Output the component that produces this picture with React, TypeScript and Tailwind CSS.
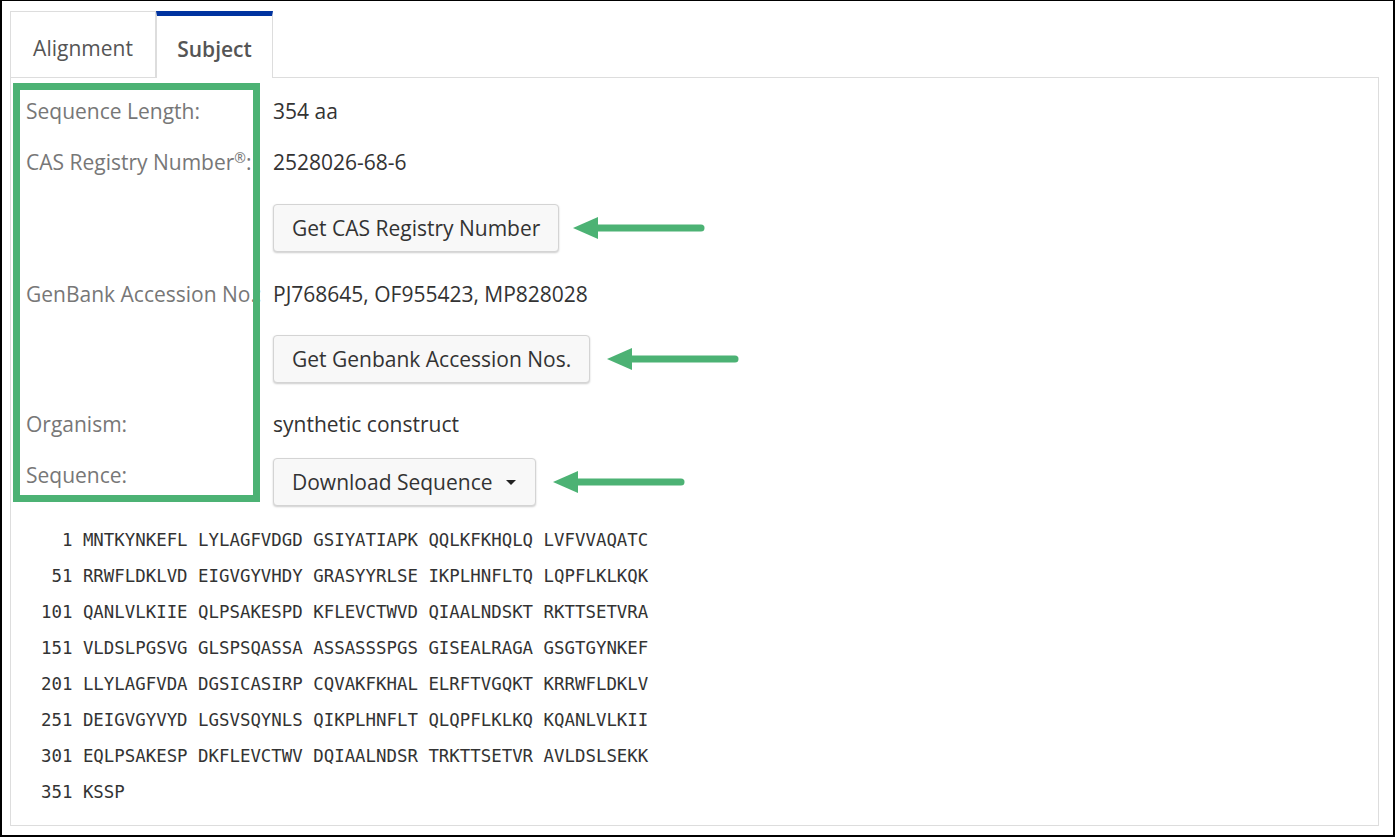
const sequence = [
  "MNTKYNKEFL LYLAGFVDGD GSIYATIAPK QQLKFKHQLQ LVFVVAQATC",
  "RRWFLDKLVD EIGVGYVHDY GRASYYRLSE IKPLHNFLTQ LQPFLKLKQK",
  "QANLVLKIIE QLPSAKESPD KFLEVCTWVD QIAALNDSKT RKTTSETVRA",
  "VLDSLPGSVG GLSPSQASSA ASSASSSPGS GISEALRAGA GSGTGYNKEF",
  "LLYLAGFVDA DGSICASIRP CQVAKFKHAL ELRFTVGQKT KRRWFLDKLV",
  "DEIGVGYVYD LGSVSQYNLS QIKPLHNFLT QLQPFLKLKQ KQANLVLKII",
  "EQLPSAKESP DKFLEVCTWV DQIAALNDSR TRKTTSETVR AVLDSLSEKK",
  "KSSP",
];

const Arrow = ({ className = "" }: { className?: string }) => (
  <svg width="132" height="24" viewBox="0 0 132 24" className={className}>
    <polygon points="0,12 25,1 25,23" fill="#4cb274" />
    <line x1="22" y1="12" x2="128" y2="12" stroke="#4cb274" strokeWidth="7" strokeLinecap="round" />
  </svg>
);

const Btn = ({ children }: { children: React.ReactNode }) => (
  <button className="h-[48px] px-[18px] flex items-center rounded-[4px] border border-[#d4d4d4] bg-[#f8f8f8] text-[21px] leading-[28px] text-[#333] shadow-[0_1px_2px_rgba(0,0,0,0.2)]">
    {children}
  </button>
);

const Row = ({ label, children, className = "" }: { label: React.ReactNode; children?: React.ReactNode; className?: string }) => (
  <div className={`flex ${className}`}>
    <div className="w-[247px] shrink-0 whitespace-nowrap text-[#777]">{label}</div>
    <div className="text-[#333]">{children}</div>
  </div>
);

export default function App() {
  return (
    <div className="w-[1395px] h-[837px] box-border overflow-hidden border-2 border-t border-black bg-white font-['Open_Sans',sans-serif] text-[21px] leading-[28px]">
      <div className="pl-[8px] pt-[10px]">
        <div className="flex">
          <div className="w-[146px] h-[67px] border border-b-0 border-[#ddd] flex items-center justify-center text-[#555] -mb-px pt-[6px]">
            Alignment
          </div>
          <div className="w-[117px] h-[67px] border-x border-[#ddd] border-t-[5px] border-t-[#0033a0] bg-white flex items-center justify-center font-semibold text-[#555] relative z-10 -mb-px pt-[4px]">
            Subject
          </div>
        </div>
        <div className="w-[1369px] h-[749px] border border-[#ddd]">
          <div className="relative pl-[15px] pt-[19px]">
            <Row label="Sequence Length:">354 aa</Row>
            <Row
              className="mt-[23px]"
              label={
                <>
                  CAS Registry Number<sup className="text-[14px]">®</sup>:
                </>
              }
            >
              2528026-68-6
            </Row>
            <div className="mt-[28px] ml-[247px] flex items-center">
              <Btn>Get CAS Registry Number</Btn>
              <Arrow className="ml-[14px]" />
            </div>
            <Row className="mt-[28px]" label="GenBank Accession No.:">
              PJ768645, OF955423, MP828028
            </Row>
            <div className="mt-[27px] ml-[247px] flex items-center">
              <Btn>Get Genbank Accession Nos.</Btn>
              <Arrow className="ml-[17px]" />
            </div>
            <Row className="mt-[27px]" label="Organism:">
              synthetic construct
            </Row>
            <div className="mt-[20px] flex">
              <div className="w-[247px] pt-[3px] text-[#777]">Sequence:</div>
              <div className="flex items-center">
                <Btn>
                  Download Sequence
                  <span className="ml-[14px] mr-[1px] inline-block border-x-[5px] border-t-[5px] border-x-transparent border-t-[#222]" />
                </Btn>
                <Arrow className="ml-[17px]" />
              </div>
            </div>
            <div className="mt-[16px] pl-[15px] font-['DejaVu_Sans_Mono',monospace] text-[17.4px] leading-[36px] text-[#333] whitespace-pre">
              {sequence.map((line, i) => (
                <div key={i}>{`${String(i * 50 + 1).padStart(3, " ")} ${line}`}</div>
              ))}
            </div>
            <div className="absolute left-[2px] top-[5px] w-[247px] h-[419px] border-[7px] border-[#4cb274]" />
          </div>
        </div>
      </div>
    </div>
  );
}
